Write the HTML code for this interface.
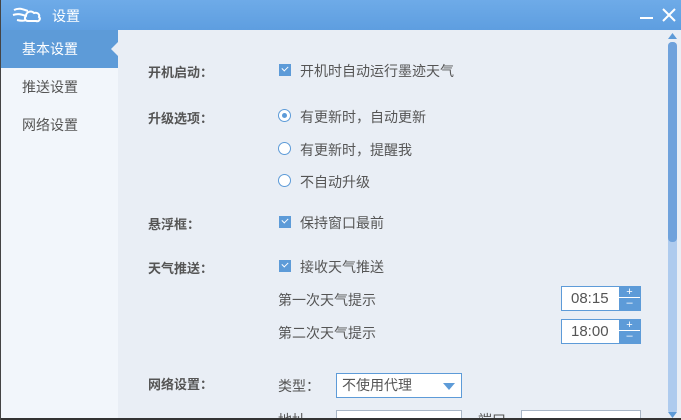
<!DOCTYPE html>
<html style="width:681px;height:420px;overflow:hidden"><head><meta charset="utf-8"><style>
*{margin:0;padding:0;box-sizing:border-box}
body{width:681px;height:420px;overflow:hidden;font-family:"Liberation Sans","Noto Sans CJK SC",sans-serif;font-size:14px;color:#555;background:#e9eef5;position:relative}
.title{position:absolute;left:0;top:0;width:681px;height:30px;background:linear-gradient(#6eabe8,#5e9ee0);color:#fff}
.side{position:absolute;left:0;top:30px;width:118px;height:390px;background:#f2f6fb}
.side div{height:38px;line-height:38px;padding-left:22px;font-size:14px;color:#555}
.side .sel{background:#5d9bd8;color:#fff;position:relative}
.side .sel:after{content:"";position:absolute;right:0;top:12px;border:7px solid transparent;border-right-color:#e9eef5}
.a{position:absolute;white-space:nowrap}
.lab{font-weight:bold;color:#555;font-size:13px}
.cb{position:absolute;width:12px;height:12px;background:#5d9bd8}
.cb:after{content:"";position:absolute;left:3px;top:2px;width:5px;height:3px;border-left:1.5px solid #fff;border-bottom:1.5px solid #fff;transform:rotate(-45deg)}
.rd{position:absolute;width:13px;height:13px;border:1px solid #5d9bd8;border-radius:50%;background:#fff}
.rd.on:after{content:"";position:absolute;left:3px;top:3px;width:5px;height:5px;border-radius:50%;background:#5d9bd8}
.tm{position:absolute;width:80px;height:25px;border:1px solid #5d9bd8;background:#fff;font-size:15px;line-height:23px;padding-left:9px;color:#555}
.tm .b{position:absolute;right:0;top:0;width:21px;height:23px;background:#5d9bd8;color:#fff;font-size:11px;line-height:11px;text-align:center}
.tm .b i{display:block;height:11px;font-style:normal;border-bottom:1px solid #fff}
.inp{position:absolute;background:#fff;border:1px solid #a9b6c6}
</style></head><body>
<div class="title">
<svg class="a" style="left:12px;top:6px" width="32" height="18" viewBox="0 0 32 18"><path d="M2 4c6-3 10 0 14 1M1 9c6-2 10 0 13 1M5 14c4 1 7 1 9 0" stroke="#fff" stroke-width="2" fill="none"/><path d="M16 15c-3 0-4-3-2-5 0-4 5-6 8-3 3-1 6 1 5 4 2 2 0 5-3 4z" stroke="#fff" stroke-width="2" fill="none"/></svg>
<span class="a" style="left:52px;top:6px;font-size:14px;color:#fff">设置</span>
<div class="a" style="left:640px;top:17px;width:13px;height:2px;background:#fff"></div>
<svg class="a" style="left:662px;top:8px" width="14" height="14"><path d="M1 1L13 13M13 1L1 13" stroke="#fff" stroke-width="2"/></svg>
</div>
<div class="side"><div class="sel">基本设置</div><div>推送设置</div><div>网络设置</div></div>

<span class="a lab" style="left:148px;top:62px">开机启动：</span>
<div class="cb" style="left:279px;top:64px"></div><span class="a" style="left:300px;top:61px">开机时自动运行墨迹天气</span>

<span class="a lab" style="left:148px;top:108px">升级选项：</span>
<div class="rd on" style="left:278px;top:109px"></div><span class="a" style="left:300px;top:107px">有更新时，自动更新</span>
<div class="rd" style="left:278px;top:142px"></div><span class="a" style="left:300px;top:140px">有更新时，提醒我</span>
<div class="rd" style="left:278px;top:174px"></div><span class="a" style="left:300px;top:172px">不自动升级</span>

<span class="a lab" style="left:148px;top:214px">悬浮框：</span>
<div class="cb" style="left:279px;top:216px"></div><span class="a" style="left:300px;top:213px">保持窗口最前</span>

<span class="a lab" style="left:148px;top:258px">天气推送：</span>
<div class="cb" style="left:279px;top:260px"></div><span class="a" style="left:300px;top:257px">接收天气推送</span>
<span class="a" style="left:278px;top:290px">第一次天气提示</span>
<div class="tm" style="left:561px;top:286px">08:15<div class="b"><i>+</i>–</div></div>
<span class="a" style="left:278px;top:323px">第二次天气提示</span>
<div class="tm" style="left:561px;top:319px">18:00<div class="b"><i>+</i>–</div></div>

<span class="a lab" style="left:148px;top:374px">网络设置：</span>
<span class="a" style="left:278px;top:376px">类型：</span>
<div class="inp" style="left:336px;top:373px;width:126px;height:25px;border-color:#5d9bd8;padding-left:5px;line-height:23px;color:#555">不使用代理<svg class="a" style="right:6px;top:9px" width="12" height="7"><path d="M0 0H12L6 7z" fill="#5d9bd8"/></svg></div>
<span class="a" style="left:278px;top:410px">地址</span>
<div class="inp" style="left:336px;top:410px;width:126px;height:8px;border-bottom:0"></div>
<span class="a" style="left:478px;top:410px">端口</span>
<div class="inp" style="left:521px;top:410px;width:120px;height:8px;border-bottom:0"></div>

<div class="a" style="left:668px;top:42px;width:9px;height:372px;background:#aecbee;border-radius:4px"></div>
<div class="a" style="left:668px;top:42px;width:9px;height:200px;background:#6fa2dc;border-radius:4px"></div>
<svg class="a" style="left:668px;top:33px" width="9" height="6"><path d="M0 6L4.5 0L9 6z" fill="#5d9bd8"/></svg>
<svg class="a" style="left:668px;top:412px" width="9" height="6"><path d="M0 0H9L4.5 6z" fill="#5d9bd8"/></svg>
<div class="a" style="left:0;top:418px;width:681px;height:2px;background:#333"></div>
<div class="a" style="left:0;top:0;width:1px;height:420px;background:#444"></div>
</body></html>
